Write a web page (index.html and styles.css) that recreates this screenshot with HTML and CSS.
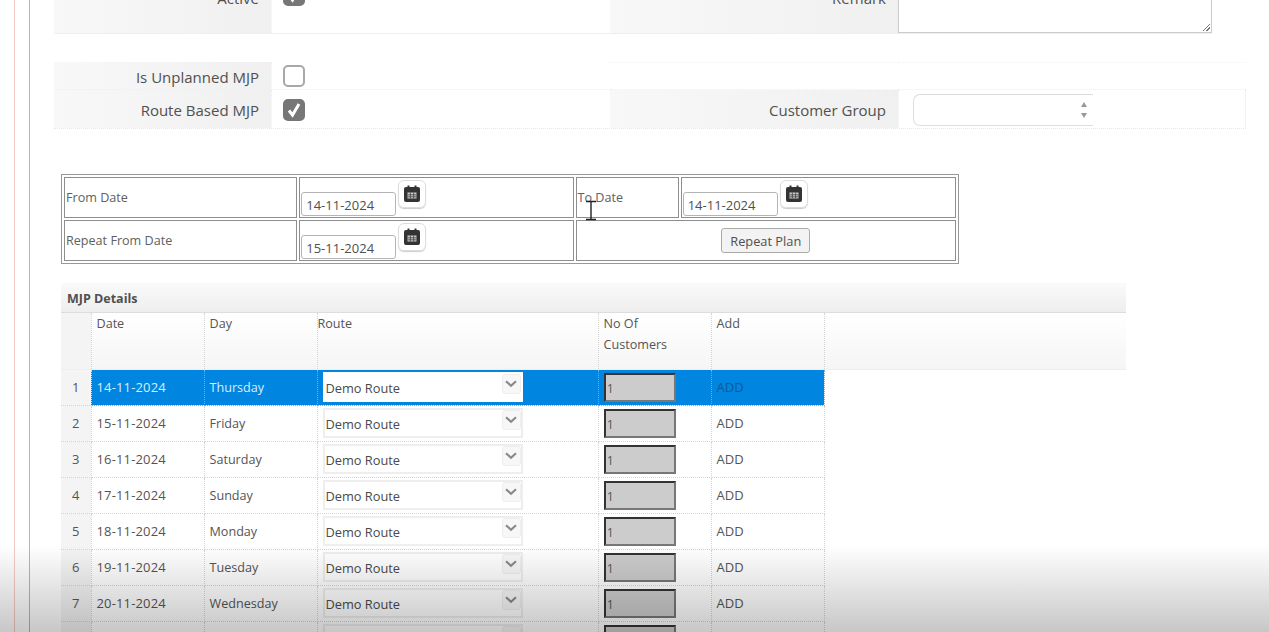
FILE: index.html
```html
<!DOCTYPE html>
<html lang="en">
<head>
  <meta charset="UTF-8" />
  <title>MJP Plan</title>
  <link rel="stylesheet" href="styles.css">
</head>
<body>
  <svg class="icon-defs" width="0" height="0">
    <symbol id="cal" viewBox="0 0 18 18">
      <path fill="#333" d="M3 2h1.5V0.5h2V2h5V0.5h2V2H15a2 2 0 0 1 2 2v11a2 2 0 0 1-2 2H3a2 2 0 0 1-2-2V4a2 2 0 0 1 2-2z"/>
      <path fill="#ccc" d="M4.5 7.5h9v6h-9z"/>
      <path fill="#333" d="M6.9 7.5h.7v6h-.7zM10.4 7.5h.7v6h-.7zM4.5 9.6h9v.7h-9zM4.5 11.6h9v.7h-9z"/>
    </symbol>
    <symbol id="chev" viewBox="0 0 12 8">
      <path fill="none" stroke="#8a8a8a" stroke-width="2.2" d="M1 1.2l5 4.6 5-4.6"/>
    </symbol>
    <symbol id="tick" viewBox="0 0 22 22">
      <path fill="none" stroke="#fff" stroke-width="3" d="M6 11.5l3.5 4.5 6.5-11"/>
    </symbol>
  </svg>

  <div class="page">
    <div class="content">
      <div class="form-grid form-top">
        <div class="label">Active</div>
        <div class="field"><span class="check checked"><svg><use href="#tick"/></svg></span></div>
        <div class="label">Remark</div>
        <div class="field field-area"><div class="remark"><span class="resize"></span></div></div>
      </div>

      <div class="form-grid form-mjp">
        <div class="label row-a">Is Unplanned MJP</div>
        <div class="field row-a"><span class="check"></span></div>
        <div class="blank row-a"></div>
        <div class="blank row-a"></div>
        <div class="label row-b">Route Based MJP</div>
        <div class="field row-b"><span class="check checked"><svg><use href="#tick"/></svg></span></div>
        <div class="label row-b">Customer Group</div>
        <div class="field row-b field-end">
          <div class="spinner">
            <span class="spin-up"></span>
            <span class="spin-down"></span>
          </div>
        </div>
      </div>

      <table class="date-table">
        <colgroup>
          <col class="dc1"><col class="dc2"><col class="dc3"><col class="dc4">
        </colgroup>
        <tr>
          <td>From Date</td>
          <td>
            <div class="date-field">
              <span class="date-input">14-11-2024</span>
              <span class="cal-btn"><svg><use href="#cal"/></svg></span>
            </div>
          </td>
          <td>To Date</td>
          <td>
            <div class="date-field">
              <span class="date-input">14-11-2024</span>
              <span class="cal-btn"><svg><use href="#cal"/></svg></span>
            </div>
          </td>
        </tr>
        <tr>
          <td>Repeat From Date</td>
          <td>
            <div class="date-field">
              <span class="date-input">15-11-2024</span>
              <span class="cal-btn"><svg><use href="#cal"/></svg></span>
            </div>
          </td>
          <td colspan="2" class="repeat-cell"><button class="repeat-btn">Repeat Plan</button></td>
        </tr>
      </table>

      <div class="panel-title">MJP Details</div>
      <table class="grid">
        <colgroup>
          <col class="gc-num"><col class="gc-date"><col class="gc-day"><col class="gc-route"><col class="gc-count"><col class="gc-add"><col>
        </colgroup>
        <thead>
          <tr>
            <th></th>
            <th>Date</th>
            <th>Day</th>
            <th class="th-route">Route</th>
            <th>No Of<br>Customers</th>
            <th>Add</th>
            <th></th>
          </tr>
        </thead>
        <tbody>
          <tr class="selected">
            <td class="num">1</td><td class="date">14-11-2024</td><td class="day">Thursday</td>
            <td><div class="route"><span>Demo Route</span><b><svg><use href="#chev"/></svg></b></div></td>
            <td><div class="count">1</div></td><td class="add">ADD</td><td class="empty"></td>
          </tr>
          <tr>
            <td class="num">2</td><td class="date">15-11-2024</td><td class="day">Friday</td>
            <td><div class="route"><span>Demo Route</span><b><svg><use href="#chev"/></svg></b></div></td>
            <td><div class="count">1</div></td><td class="add">ADD</td><td class="empty"></td>
          </tr>
          <tr>
            <td class="num">3</td><td class="date">16-11-2024</td><td class="day">Saturday</td>
            <td><div class="route"><span>Demo Route</span><b><svg><use href="#chev"/></svg></b></div></td>
            <td><div class="count">1</div></td><td class="add">ADD</td><td class="empty"></td>
          </tr>
          <tr>
            <td class="num">4</td><td class="date">17-11-2024</td><td class="day">Sunday</td>
            <td><div class="route"><span>Demo Route</span><b><svg><use href="#chev"/></svg></b></div></td>
            <td><div class="count">1</div></td><td class="add">ADD</td><td class="empty"></td>
          </tr>
          <tr>
            <td class="num">5</td><td class="date">18-11-2024</td><td class="day">Monday</td>
            <td><div class="route"><span>Demo Route</span><b><svg><use href="#chev"/></svg></b></div></td>
            <td><div class="count">1</div></td><td class="add">ADD</td><td class="empty"></td>
          </tr>
          <tr>
            <td class="num">6</td><td class="date">19-11-2024</td><td class="day">Tuesday</td>
            <td><div class="route"><span>Demo Route</span><b><svg><use href="#chev"/></svg></b></div></td>
            <td><div class="count">1</div></td><td class="add">ADD</td><td class="empty"></td>
          </tr>
          <tr>
            <td class="num">7</td><td class="date">20-11-2024</td><td class="day">Wednesday</td>
            <td><div class="route"><span>Demo Route</span><b><svg><use href="#chev"/></svg></b></div></td>
            <td><div class="count">1</div></td><td class="add">ADD</td><td class="empty"></td>
          </tr>
          <tr>
            <td class="num"></td><td></td><td></td>
            <td><div class="route"><span></span><b><svg><use href="#chev"/></svg></b></div></td>
            <td><div class="count"></div></td><td class="add"></td><td class="empty"></td>
          </tr>
        </tbody>
      </table>
    </div>
  </div>

  <svg class="ibeam" width="12" height="22" viewBox="0 0 12 22">
    <path fill="none" stroke="#222" stroke-width="1.4" d="M1 1.5h10M6 1.5v18M1 19.5h10"/>
  </svg>
  <div class="video-shade"></div>
</body>
</html>
```

FILE: styles.css
```css
html, body {
  margin: 0;
  height: 632px;
  overflow: hidden;
  background: #fff;
}
body {
  font-family: "Open Sans", "Noto Sans", sans-serif;
  font-size: 14px;
  color: #555;
}
.icon-defs {
  position: absolute;
}
.page {
  margin-left: 14px;
  padding-left: 14px;
  border-left: 1px solid #f6c9c4;
  height: 632px;
}
.content {
  display: flow-root;
  border-left: 1px solid #b5b5b5;
  padding-left: 24px;
  height: 632px;
}

/* form blocks */
.form-grid {
  display: grid;
}
.form-top {
  grid-template-columns: 217px 339px 288px 314px;
  grid-template-rows: 39px;
  margin-top: -6px;
  border-bottom: 1px solid #eee;
  width: 1158px;
}
.form-mjp {
  grid-template-columns: 217px 339px 288px 348px;
  grid-template-rows: 28px 38px;
  margin-top: 28px;
  width: 1192px;
  border-bottom: 1px dotted #e8e8e8;
}
.label {
  background: linear-gradient(to right, #f8f8f8, #f0f0f0);
  padding-right: 12px;
  font-size: 15px;
  color: #505050;
  display: flex;
  align-items: center;
  justify-content: flex-end;
}
.form-top .label {
  align-items: flex-start;
  line-height: 8px;
}
.form-mjp .label {
  padding-top: 2px;
}
.field {
  padding-left: 11px;
  display: flex;
  align-items: center;
  border-left: 1px dotted #eee;
}
.form-top .field {
  align-items: flex-start;
}
.form-mjp .row-a {
  border-bottom: 1px dotted #eee;
}
.form-mjp .field.row-b {
  padding-top: 2px;
}
.blank {
  border-top: 1px dotted #f4f4f4;
}
.field-end {
  border-right: 1px dotted #e8e8e8;
  padding-left: 14px;
}
.field-area {
  padding-left: 0;
  border: 0;
}
.remark {
  width: 100%;
  height: 39px;
  box-sizing: border-box;
  border: 1px solid #ccc;
  border-top: 0;
  position: relative;
}
.resize {
  position: absolute;
  right: 1px;
  bottom: 1px;
  width: 7px;
  height: 7px;
  background: linear-gradient(135deg, transparent 45%, #777 45%, #777 55%, transparent 55%, transparent 70%, #777 70%, #777 80%, transparent 80%);
}
.check {
  width: 22px;
  height: 22px;
  box-sizing: border-box;
  border: 2px solid #a8a8a8;
  border-radius: 5px;
  background: #fff;
  display: block;
}
.check.checked {
  background: #777;
  border-color: #777;
  overflow: hidden;
}
.check svg {
  width: 22px;
  height: 22px;
  margin: -2px;
  display: block;
}
.form-top .check {
  margin-top: -10px;
}
.spinner {
  width: 180px;
  height: 32px;
  box-sizing: border-box;
  border: 1px solid #ddd;
  border-right: 0;
  border-radius: 7px 0 0 7px;
  display: flex;
  flex-direction: column;
  align-items: flex-end;
  justify-content: center;
  gap: 6px;
  padding-right: 6px;
}
.spin-up, .spin-down {
  width: 0;
  height: 0;
  border-left: 3.5px solid transparent;
  border-right: 3.5px solid transparent;
}
.spin-up {
  border-bottom: 5px solid #999;
}
.spin-down {
  border-top: 5px solid #999;
}

/* date table */
.date-table {
  margin: 45px 0 0 7px;
  border: 1px solid #999;
  border-collapse: separate;
  border-spacing: 2px;
  table-layout: fixed;
  width: 898px;
  font-size: 12.6px;
}
.dc1 { width: 233px; }
.dc2 { width: 274px; }
.dc3 { width: 103px; }
.dc4 { width: 275px; }
.date-table td {
  border: 1px solid #8e8e8e;
  height: 41px;
  box-sizing: border-box;
  padding: 0 1px;
  vertical-align: middle;
  color: #606060;
}
.date-field {
  display: flex;
  align-items: flex-start;
  gap: 2px;
  height: 39px;
}
.date-input {
  width: 95px;
  height: 24px;
  box-sizing: border-box;
  margin-top: 14px;
  border: 1px solid #b5b5b5;
  border-radius: 3px;
  padding: 3px 0 0 4px;
  font-size: 13px;
  line-height: 18px;
  color: #505050;
}
.cal-btn {
  width: 28px;
  height: 28px;
  box-sizing: border-box;
  margin-top: 2px;
  border: 1px solid #ddd;
  border-radius: 6px;
  box-shadow: 0 1px 1px #ccc;
  display: flex;
  align-items: center;
  justify-content: center;
}
.cal-btn svg {
  width: 18px;
  height: 18px;
}
.repeat-cell {
  text-align: center;
}
.repeat-btn {
  width: 89px;
  height: 25px;
  padding: 0;
  font-family: inherit;
  font-size: 12.8px;
  color: #505050;
  background: #f3f3f3;
  border: 1px solid #aaa;
  border-radius: 3px;
}

/* MJP grid */
.panel-title {
  margin: 19px 0 0 7px;
  width: 1065px;
  height: 30px;
  padding-left: 6px;
  background: linear-gradient(#fafafa, #eee);
  border-bottom: 1px solid #ddd;
  box-sizing: border-box;
  font-size: 12.5px;
  font-weight: bold;
  line-height: 31px;
  color: #505050;
}
.grid {
  margin-left: 7px;
  width: 1065px;
  border-collapse: collapse;
  table-layout: fixed;
  font-size: 13px;
}
.gc-num { width: 30px; }
.gc-date { width: 113px; }
.gc-day { width: 113px; }
.gc-route { width: 281px; }
.gc-count { width: 113px; }
.gc-add { width: 113px; }
.grid th {
  height: 56px;
  padding: 0 5px;
  box-sizing: border-box;
  vertical-align: top;
  text-align: left;
  font-size: 12.6px;
  font-weight: normal;
  line-height: 21px;
  color: #555;
  background: linear-gradient(#fff, #f5f5f5);
  border-left: 1px dotted #d4d4d4;
  border-bottom: 1px solid #eee;
}
.grid th:first-child {
  border-left: 0;
  background: #f4f4f4;
}
.grid .th-route {
  padding-left: 0;
}
.grid td {
  height: 36px;
  padding: 0 5px;
  box-sizing: border-box;
  border: 1px dotted #d4d4d4;
  color: #555;
}
.grid td.num {
  background: #f4f4f4;
  text-align: center;
  border-left: 0;
}
.grid td.date {
  letter-spacing: 0.15px;
}
.grid td.day {
  font-size: 12.6px;
}
.grid td.empty {
  border: 0;
}
.route {
  width: 200px;
  height: 30px;
  box-sizing: border-box;
  border: 2px solid #eee;
  background: #fff;
  padding: 2px 0 0 1px;
  display: flex;
  align-items: center;
  justify-content: space-between;
  font-size: 12.8px;
  color: #4a4a4a;
}
.route b {
  width: 19px;
  height: 20px;
  box-sizing: border-box;
  border: 1px solid #eee;
  border-radius: 3px;
  background: #f7f7f7;
  margin: -8px 0 0 0;
  display: flex;
  align-items: center;
  justify-content: center;
}
.route svg {
  width: 12px;
  height: 8px;
}
.count {
  width: 72px;
  height: 29px;
  box-sizing: border-box;
  border: 2px solid;
  border-color: #333 #777 #777 #333;
  background: #ccc;
  padding-left: 1px;
  line-height: 27px;
  font-size: 13px;
  color: #5c5c5c;
}
.selected td:not(.num) {
  background: #0085e0;
  border-color: #60b4ea;
  color: #d8eefc;
}
.selected td.empty {
  background: transparent;
}
.selected td.add {
  color: #0a5c96;
}
.selected .route {
  border-color: #fff;
}

/* overlays */
.ibeam {
  position: absolute;
  left: 585px;
  top: 200px;
}
.video-shade {
  position: absolute;
  left: 0;
  right: 0;
  top: 545px;
  height: 87px;
  background: linear-gradient(rgba(0, 0, 0, 0), rgba(0, 0, 0, 0.22));
  pointer-events: none;
}
```
